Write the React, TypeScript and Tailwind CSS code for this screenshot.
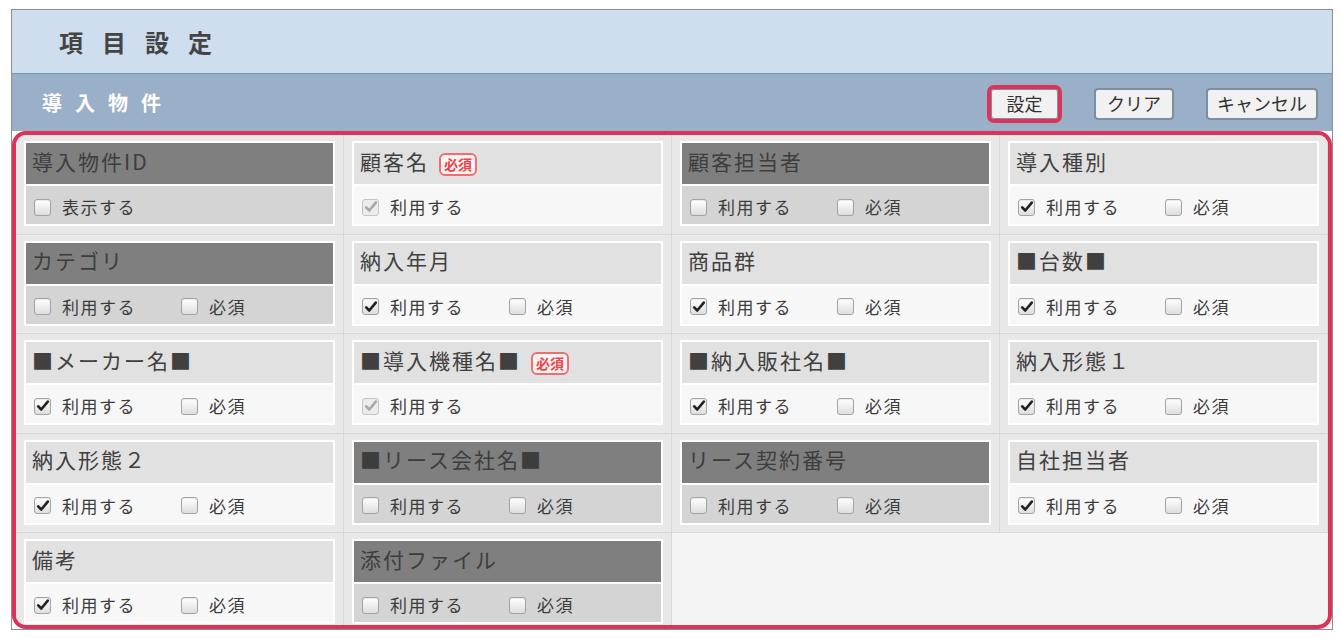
import React from 'react';

type Item = {
  label: string;
  dark?: boolean;
  badge?: boolean;
  only?: string;
  use?: boolean;
  locked?: boolean;
};

const ITEMS: Item[] = [
  { label: '導入物件ID', dark: true, only: '表示する' },
  { label: '顧客名', badge: true, use: true, locked: true },
  { label: '顧客担当者', dark: true },
  { label: '導入種別', use: true },
  { label: 'カテゴリ', dark: true },
  { label: '納入年月', use: true },
  { label: '商品群', use: true },
  { label: '■台数■', use: true },
  { label: '■メーカー名■', use: true },
  { label: '■導入機種名■', badge: true, use: true, locked: true },
  { label: '■納入販社名■', use: true },
  { label: '納入形態１', use: true },
  { label: '納入形態２', use: true },
  { label: '■リース会社名■', dark: true },
  { label: 'リース契約番号', dark: true },
  { label: '自社担当者', use: true },
  { label: '備考', use: true },
  { label: '添付ファイル', dark: true },
];

const FONT = { fontFamily: '"Noto Sans CJK JP", "Noto Sans", sans-serif' };

function Box({ checked, disabled }: { checked?: boolean; disabled?: boolean }) {
  return (
    <span
      className={
        'relative inline-flex h-[17px] w-[17px] shrink-0 items-center justify-center rounded-[3px] border ' +
        (disabled
          ? 'border-[#c4c4c4] bg-[#ececec]'
          : 'border-[#a3a3a3] bg-gradient-to-b from-white to-[#dedede] shadow-[inset_0_1px_1px_rgba(0,0,0,0.08)]')
      }
    >
      {checked && (
        <svg viewBox="0 0 16 16" className="h-[14px] w-[14px]">
          <path
            d="M2.5 8.5 L6 12 L13.5 3"
            fill="none"
            stroke={disabled ? '#a8a8a8' : '#222'}
            strokeWidth={3}
            strokeLinecap="round"
            strokeLinejoin="round"
          />
        </svg>
      )}
    </span>
  );
}

function Card({ item }: { item: Item }) {
  return (
    <div className="flex flex-col gap-[2px] border-2 border-white bg-white">
      <div
        className={
          'flex h-[41px] items-center gap-[10px] pb-[4px] pl-[6px] text-[21px] ' +
          (item.dark ? 'bg-[#7f7f7f] text-[#3d3d3d]' : 'bg-[#e1e1e1] text-[#404040]')
        }
      >
        <span className="tracking-[2px]">{item.label}</span>
        {item.badge && (
          <span className="mt-[6px] rounded-[6px] border-2 border-[#ef6f6f] bg-[#fff2f2] px-[3px] text-[14px] leading-[19px] font-bold text-[#e8474b]">
            必須
          </span>
        )}
      </div>
      <div
        className={
          'flex h-[38px] items-center pt-[4px] pl-[8px] text-[17px] tracking-[1.5px] text-[#3c3c3c] ' +
          (item.dark ? 'bg-[#d4d4d4]' : 'bg-[#f7f7f7]')
        }
      >
        {item.only ? (
          <span className="flex items-center gap-[11px]">
            <Box />
            {item.only}
          </span>
        ) : (
          <>
            <span className="flex w-[147px] items-center gap-[11px]">
              <Box checked={item.use} disabled={item.locked} />
              利用する
            </span>
            {!item.locked && (
              <span className="flex items-center gap-[11px]">
                <Box />
                必須
              </span>
            )}
          </>
        )}
      </div>
    </div>
  );
}

export default function App() {
  return (
    <div className="h-[639px] w-[1340px] overflow-hidden bg-white pt-[9px] pl-[11px]" style={FONT}>
      <div className="w-[1322px] border border-[#8e8e8e] bg-white">
        <div className="flex h-[63px] items-center bg-[#cedeee] pl-[47px]">
          <h1 className="text-[24px] font-bold tracking-[19px] text-[#444]">項目設定</h1>
        </div>
        <div className="flex h-[58px] items-center justify-between border-t border-[#7f93ab] bg-[#9aafc8] pr-[14px] pl-[30px]">
          <h2 className="text-[20px] font-bold tracking-[13px] text-white">導入物件</h2>
          <div className="flex items-center gap-[32px] pt-[2px] text-[18px] text-[#333]">
            <span className="rounded-[7px] border-4 border-[#dc3458]">
              <button className="h-[30px] w-[67px] rounded-[3px] border border-[#7d8ea3] bg-[#f1f1f1]">設定</button>
            </span>
            <button className="h-[32px] w-[80px] rounded-[4px] border-2 border-[#7d8ea3] bg-[#f1f1f1]">クリア</button>
            <button className="h-[32px] w-[112px] rounded-[4px] border-2 border-[#7d8ea3] bg-[#f1f1f1]">キャンセル</button>
          </div>
        </div>
        <div className="h-[498px] overflow-hidden rounded-[14px] border-4 border-[#dc3458] bg-[#f4f4f4]">
          <div className="grid grid-cols-4 auto-rows-[99.5px]">
            {ITEMS.map((item) => (
              <div
                key={item.label}
                className="border-r border-b border-[#d8d8d8] bg-[#e8e8e8] px-[8px] pt-[6px]"
              >
                <Card item={item} />
              </div>
            ))}
          </div>
        </div>
      </div>
    </div>
  );
}
